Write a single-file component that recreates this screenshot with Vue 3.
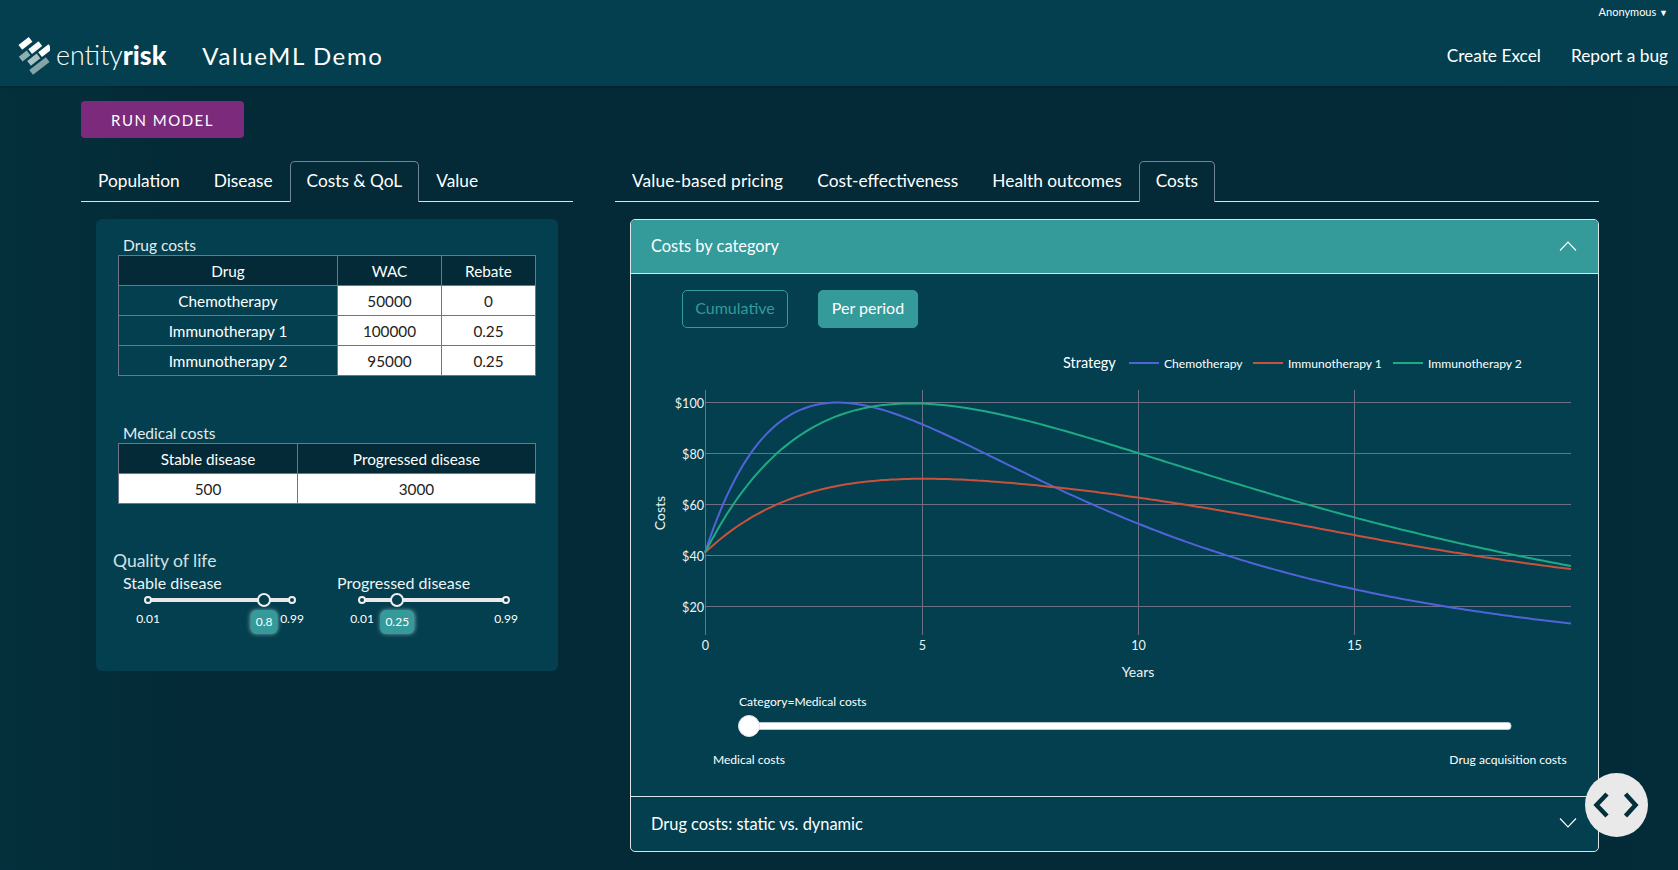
<template>
  <div class="page">
    <header class="topbar">
      <div class="user-row">Anonymous <span class="caret">▼</span></div>
      <div class="nav-row">
        <svg class="logo-mark" viewBox="0 0 32 40" width="32" height="40">
          <g transform="translate(16 20) rotate(-38)">
            <rect x="-6" y="-17.5" width="13" height="6" fill="#fff" />
            <rect x="-13" y="-8" width="10" height="6" fill="#8fb0b3" />
            <rect x="-1" y="-8" width="13" height="6" fill="#f4f7f7" />
            <rect x="-9" y="0.5" width="12" height="6" fill="#a9c2c4" />
            <rect x="5" y="0.5" width="13" height="6" fill="#fff" />
            <rect x="-13" y="9" width="21" height="6" fill="#84a4a8" />
          </g>
        </svg>
        <div class="logo-text">entity<b>risk</b></div>
        <div class="app-title">ValueML Demo</div>
        <div class="nav-links">
          <a>Create Excel</a>
          <a>Report a bug</a>
        </div>
      </div>
    </header>

    <main class="content">
      <button class="run-btn">RUN MODEL</button>
      <div class="columns">
        <section class="left-col">
          <div class="tabs">
            <div v-for="t in leftTabs" :key="t" class="tab" :class="{ active: t === 'Costs & QoL' }">{{ t }}</div>
          </div>
          <div class="card">
            <div class="table-title">Drug costs</div>
            <table class="grid-table drug-table">
              <thead>
                <tr><th class="c1">Drug</th><th class="c2">WAC</th><th>Rebate</th></tr>
              </thead>
              <tbody>
                <tr v-for="d in drugs" :key="d.name">
                  <td>{{ d.name }}</td>
                  <td class="input-cell">{{ d.wac }}</td>
                  <td class="input-cell">{{ d.rebate }}</td>
                </tr>
              </tbody>
            </table>
            <div class="table-title second">Medical costs</div>
            <table class="grid-table med-table">
              <thead>
                <tr><th class="m1">Stable disease</th><th>Progressed disease</th></tr>
              </thead>
              <tbody>
                <tr><td class="input-cell">500</td><td class="input-cell">3000</td></tr>
              </tbody>
            </table>
            <div class="qol-title">Quality of life</div>
            <div class="sliders">
              <div v-for="s in sliders" :key="s.label" class="slider">
                <div class="slider-label">{{ s.label }}</div>
                <div class="slider-track">
                  <span class="dot start"></span>
                  <span class="dot end"></span>
                  <span class="handle" :style="{ left: pct(s.value) }"></span>
                  <span class="bound start-label">0.01</span>
                  <span class="bound end-label">0.99</span>
                  <span class="value-tip" :style="{ left: pct(s.value) }">{{ s.value }}</span>
                </div>
              </div>
            </div>
          </div>
        </section>

        <section class="right-col">
          <div class="tabs">
            <div v-for="t in rightTabs" :key="t" class="tab" :class="{ active: t === 'Costs' }">{{ t }}</div>
          </div>
          <div class="accordion">
            <div class="acc-head open">
              <span>Costs by category</span>
              <svg width="18" height="10" viewBox="0 0 18 10"><path d="M1 9.5 9 1l8 8.5" fill="none" stroke="#fff" stroke-width="1.1" /></svg>
            </div>
            <div class="acc-body">
              <div class="mode-row">
                <button class="mode-btn">Cumulative</button>
                <button class="mode-btn on">Per period</button>
              </div>
              <svg class="chart" viewBox="631 328 967 468" width="967" height="468">
                <text x="1063" y="368" class="legend-title">Strategy</text>
                <g v-for="l in legend" :key="l.name">
                  <line :x1="l.x" :x2="l.x + 30" y1="363" y2="363" :stroke="l.color" stroke-width="2" />
                  <text :x="l.x + 35" y="368" class="legend-item">{{ l.name }}</text>
                </g>

                <line v-for="y in yTicks" :key="'h' + y.v" x1="705" x2="1571" :y1="y.y" :y2="y.y" class="gridline" />
                <line v-for="x in xTicks" :key="'v' + x.v" :x1="x.x" :x2="x.x" y1="390" y2="635" class="gridline" />
                <text v-for="y in yTicks" :key="'yl' + y.v" x="704" :y="y.y + 5" text-anchor="end" class="tick">${{ y.v }}</text>
                <text v-for="x in xTicks" :key="'xl' + x.v" :x="x.x" y="650" text-anchor="middle" class="tick">{{ x.v }}</text>
                <text x="1138" y="677" text-anchor="middle" class="axis-title">Years</text>
                <text transform="translate(665 513) rotate(-90)" text-anchor="middle" class="axis-title">Costs</text>

                <path v-for="c in curves" :key="c.name" :d="c.d" fill="none" :stroke="c.color" stroke-width="2" />

                <text x="739" y="706" class="slider-text">Category=Medical costs</text>
                <rect x="749" y="722.5" width="762" height="7" rx="3" fill="#fff" stroke="#b9c6d6" stroke-width="1" />
                <ellipse cx="749" cy="726" rx="10.5" ry="10.5" fill="#fff" stroke="#dfe5ec" stroke-width="1" />
                <line x1="749" x2="749" y1="741" y2="747" stroke="#1f3d4a" />
                <line x1="1508" x2="1508" y1="741" y2="747" stroke="#1f3d4a" />
                <text x="749" y="764" text-anchor="middle" class="slider-text">Medical costs</text>
                <text x="1508" y="764" text-anchor="middle" class="slider-text">Drug acquisition costs</text>
              </svg>
            </div>
            <div class="acc-head">
              <span>Drug costs: static vs. dynamic</span>
              <svg width="18" height="10" viewBox="0 0 18 10"><path d="M1 .5 9 9l8-8.5" fill="none" stroke="#fff" stroke-width="1.1" /></svg>
            </div>
          </div>
        </section>
      </div>
    </main>

    <div class="code-fab">
      <svg width="48" height="32" viewBox="0 0 48 32">
        <path d="M14 5 3.5 16 14 27M32.5 5l10 11-10 11" fill="none" stroke="#04303c" stroke-width="4.5" />
      </svg>
    </div>
  </div>
</template>

<script setup>
const leftTabs = ['Population', 'Disease', 'Costs & QoL', 'Value'];
const rightTabs = ['Value-based pricing', 'Cost-effectiveness', 'Health outcomes', 'Costs'];

const drugs = [
  { name: 'Chemotherapy', wac: 50000, rebate: 0 },
  { name: 'Immunotherapy 1', wac: 100000, rebate: 0.25 },
  { name: 'Immunotherapy 2', wac: 95000, rebate: 0.25 },
];

const sliders = [
  { label: 'Stable disease', value: 0.8 },
  { label: 'Progressed disease', value: 0.25 },
];

const pct = (v) => ((v - 0.01) / 0.98) * 100 + '%';

const yTicks = [
  { v: 100, y: 402.5 },
  { v: 80, y: 453.5 },
  { v: 60, y: 504.5 },
  { v: 40, y: 555.5 },
  { v: 20, y: 606.5 },
];
const xTicks = [
  { v: 0, x: 705.5 },
  { v: 5, x: 922.5 },
  { v: 10, x: 1138.5 },
  { v: 15, x: 1354.5 },
];

const legend = [
  { name: 'Chemotherapy', x: 1129, color: '#5064d8' },
  { name: 'Immunotherapy 1', x: 1253, color: '#c9523c' },
  { name: 'Immunotherapy 2', x: 1393, color: '#1faa86' },
];

// cost per period over 20 years, rise then exponential decay
const decay = (b, d, lambda, kappa) => (t) =>
  b * Math.exp(-lambda * t) * (1 - d * Math.exp(-kappa * t));

const toPath = (fn) => {
  let d = '';
  for (let i = 0; i <= 200; i++) {
    const t = i / 10;
    const x = 705 + 43.3 * t;
    const y = 402.5 + (100 - fn(t)) * 2.55;
    d += `${i ? 'L' : 'M'}${x.toFixed(1)} ${y.toFixed(1)}`;
  }
  return d;
};

const immuno1 = decay(115, 0.642, 0.06, 0.25);

const curves = [
  { name: 'chemo', color: '#5064d8', d: toPath(decay(220, 0.813, 0.14, 0.323)) },
  {
    name: 'immuno1',
    color: '#c9523c',
    d: toPath((t) => immuno1(t) + 3.2 * Math.exp(-((t - 11.5) ** 2) / 24.5)),
  },
  { name: 'immuno2', color: '#1faa86', d: toPath(decay(220, 0.813, 0.09, 0.206)) },
];
</script>

<style>
html,
body {
  margin: 0;
  background: #032a36;
}
</style>

<style scoped>
.page {
  position: relative;
  height: 870px;
  overflow: hidden;
  background: linear-gradient(90deg, #03303c 0%, #032a36 12%, #032a36 88%, #032c38 100%);
  color: #fff;
  font-family: Lato, "Noto Sans", sans-serif;
}

.topbar {
  height: 86px;
  box-sizing: border-box;
  background: #033f4f;
  padding: 0 10px 0 18px;
  box-shadow: 0 1px 2px rgba(0, 0, 0, 0.25);
}

.user-row {
  height: 24px;
  line-height: 24px;
  font-size: 11px;
  text-align: right;
}

.caret {
  font-size: 9px;
}

.nav-row {
  display: flex;
  align-items: center;
  height: 62px;
}

.logo-mark {
  flex: none;
}

.logo-text {
  margin-left: 6px;
  font-size: 26.8px;
  font-weight: 300;
}

.logo-text b {
  font-weight: 900;
}

.app-title {
  margin-left: 36px;
  font-size: 24px;
  letter-spacing: 1.6px;
}

.nav-links {
  margin-left: auto;
  display: flex;
  gap: 30px;
  font-size: 17.3px;
}

.content {
  padding: 15px 0 0 81px;
}

.run-btn {
  display: block;
  width: 163px;
  height: 37px;
  border: 0;
  border-radius: 4px;
  background: #7b2a7c;
  color: #fff;
  font-family: inherit;
  font-size: 15px;
  letter-spacing: 1.5px;
}

.columns {
  display: flex;
  gap: 42px;
  margin-top: 23px;
}

.left-col {
  width: 492px;
}

.right-col {
  width: 984px;
}

.right-col .tab:first-child {
  letter-spacing: 0.15px;
}

.tabs {
  display: flex;
  height: 41px;
  box-sizing: border-box;
  border-bottom: 1px solid #dbe4e6;
}

.tab {
  height: 41px;
  box-sizing: border-box;
  padding: 0 16px;
  line-height: 37px;
  font-size: 17.3px;
  border: 1px solid transparent;
  border-bottom: 0;
}

.tab.active {
  border-color: #6f8692;
  border-radius: 5px 5px 0 0;
  background: #032a36;
}

.card {
  margin: 17px 0 0 15px;
  width: 462px;
  height: 452px;
  box-sizing: border-box;
  padding: 16px 22px 0;
  background: #033f4f;
  border-radius: 6px;
}

.table-title {
  padding-left: 5px;
  height: 20px;
  line-height: 20px;
  font-size: 15.5px;
  color: #e6ecec;
}

.table-title.second {
  margin-top: 47px;
}

.grid-table {
  width: 418px;
  table-layout: fixed;
  border-collapse: collapse;
  font-size: 15.3px;
  text-align: center;
}

.grid-table th,
.grid-table td {
  height: 30px;
  padding: 0;
  box-sizing: border-box;
  border: 1px solid #70738a;
  font-weight: 400;
}

.grid-table th {
  background: #032a36;
}

.c1 {
  width: 219px;
}

.c2 {
  width: 104px;
}

.m1 {
  width: 179px;
}

.input-cell {
  background: #fff;
  color: #222;
}

.qol-title {
  margin: 46px 0 0 -5px;
  height: 22px;
  line-height: 22px;
  font-size: 17.5px;
  color: #d6e0e0;
}

.sliders {
  display: flex;
  margin-left: 5px;
}

.slider {
  flex: none;
  width: 214px;
}

.slider-label {
  height: 21px;
  line-height: 21px;
  font-size: 16px;
  color: #eef3f3;
}

.slider-track {
  position: relative;
  margin: 5px 0 0 25px;
  width: 144px;
  height: 4px;
  background: #e9e9e9;
}

.dot {
  position: absolute;
  top: -2px;
  width: 8px;
  height: 8px;
  box-sizing: border-box;
  border: 2px solid #f0f0f0;
  border-radius: 50%;
  background: #033f4f;
}

.dot.start {
  left: -4px;
}

.dot.end {
  right: -4px;
}

.handle {
  position: absolute;
  top: -5px;
  width: 14px;
  height: 14px;
  margin-left: -7px;
  box-sizing: border-box;
  border: 2px solid #f0f0f0;
  border-radius: 50%;
  background: #033f4f;
}

.bound {
  position: absolute;
  top: 13px;
  transform: translateX(-50%);
  font-size: 12px;
  line-height: 15px;
}

.start-label {
  left: 0;
}

.end-label {
  left: 100%;
}

.value-tip {
  position: absolute;
  top: 12px;
  transform: translateX(-50%);
  padding: 4px 5px;
  min-width: 15px;
  height: 16px;
  line-height: 16px;
  font-size: 12px;
  text-align: center;
  background: #359a9a;
  border-radius: 6px;
  box-shadow: 0 0 4px rgba(220, 240, 240, 0.55);
}

.accordion {
  margin: 17px 0 0 15px;
  width: 969px;
  box-sizing: border-box;
  border: 1px solid #dbe4e6;
  border-radius: 5px;
  background: #033f4f;
  overflow: hidden;
}

.acc-head {
  display: flex;
  align-items: center;
  justify-content: space-between;
  height: 54px;
  box-sizing: border-box;
  padding: 0 21px 2px 20px;
  font-size: 16.4px;
}

.acc-head.open {
  background: #359a9a;
  border-bottom: 1px solid #dbe4e6;
}

.acc-body {
  border-bottom: 1px solid #dbe4e6;
}

.mode-row {
  display: flex;
  gap: 30px;
  padding: 16px 0 0 51px;
}

.mode-btn {
  width: 106px;
  height: 38px;
  box-sizing: border-box;
  padding: 0 0 3px;
  border: 1px solid #359a9a;
  border-radius: 5px;
  background: transparent;
  color: #359a9a;
  font-family: inherit;
  font-size: 16px;
}

.mode-btn.on {
  width: 100px;
  background: #359a9a;
  color: #fff;
}

.chart {
  display: block;
}

.gridline {
  stroke: #6d6f84;
  stroke-width: 1;
}

.tick {
  fill: #eef3f3;
  font-size: 12.6px;
}

.axis-title {
  fill: #eef3f3;
  font-size: 14px;
}

.legend-title {
  fill: #fff;
  font-size: 14.5px;
}

.legend-item {
  fill: #fff;
  font-size: 12.1px;
}

.slider-text {
  fill: #fff;
  font-size: 12.1px;
}

.code-fab {
  position: absolute;
  left: 1585px;
  top: 773px;
  width: 63px;
  height: 64px;
  display: flex;
  align-items: center;
  justify-content: center;
  border-radius: 50%;
  background: #e9e9e9;
}
</style>
